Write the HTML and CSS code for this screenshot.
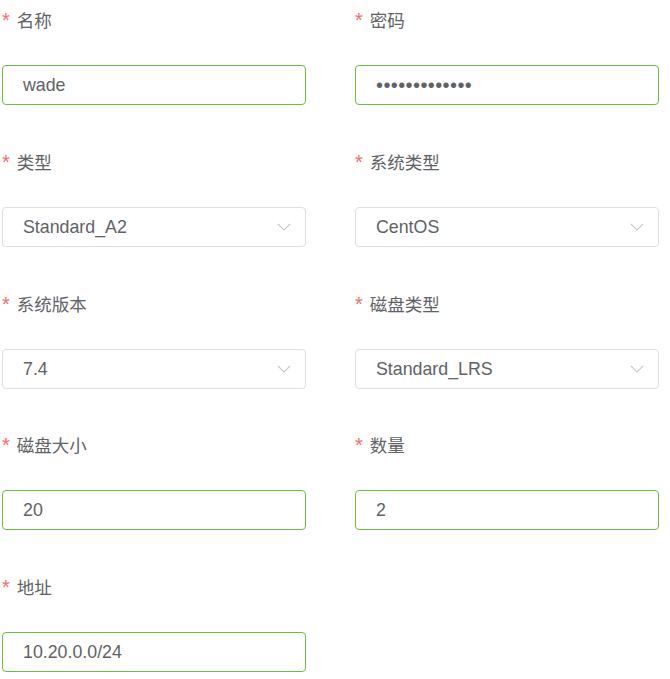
FILE: index.html
```html
<!DOCTYPE html>
<html lang="zh">
<head>
<meta charset="utf-8">
<link rel="stylesheet" href="styles.css">
</head>
<body>
<form class="form">
  <div class="item">
    <div class="label"><span class="req">*</span>名称</div>
    <div class="control ok">wade</div>
  </div>
  <div class="item">
    <div class="label"><span class="req">*</span>密码</div>
    <div class="control ok dots">•••••••••••••</div>
  </div>
  <div class="item">
    <div class="label"><span class="req">*</span>类型</div>
    <div class="control select">Standard_A2<svg class="arrow" viewBox="0 0 16 9"><polyline points="1,1 8,8 15,1"/></svg></div>
  </div>
  <div class="item">
    <div class="label"><span class="req">*</span>系统类型</div>
    <div class="control select">CentOS<svg class="arrow" viewBox="0 0 16 9"><polyline points="1,1 8,8 15,1"/></svg></div>
  </div>
  <div class="item">
    <div class="label"><span class="req">*</span>系统版本</div>
    <div class="control select">7.4<svg class="arrow" viewBox="0 0 16 9"><polyline points="1,1 8,8 15,1"/></svg></div>
  </div>
  <div class="item">
    <div class="label"><span class="req">*</span>磁盘类型</div>
    <div class="control select">Standard_LRS<svg class="arrow" viewBox="0 0 16 9"><polyline points="1,1 8,8 15,1"/></svg></div>
  </div>
  <div class="item">
    <div class="label"><span class="req">*</span>磁盘大小</div>
    <div class="control ok">20</div>
  </div>
  <div class="item">
    <div class="label"><span class="req">*</span>数量</div>
    <div class="control ok">2</div>
  </div>
  <div class="item">
    <div class="label"><span class="req">*</span>地址</div>
    <div class="control ok">10.20.0.0/24</div>
  </div>
</form>
</body>
</html>
```
FILE: styles.css
```css
html, body {
  margin: 0;
  padding: 0;
  background: #fff;
}
body {
  font-family: "Liberation Sans", "Noto Sans CJK SC", sans-serif;
  color: #606266;
}
.form {
  display: grid;
  grid-template-columns: 304px 304px;
  column-gap: 49px;
  padding-left: 2px;
}
.item {
  display: flex;
  flex-direction: column;
  padding-bottom: 36.75px;
}
.label {
  height: 40px;
  line-height: 40px;
  font-size: 17.5px;
  font-family: "Noto Sans CJK SC", sans-serif;
  color: #606266;
  margin-bottom: 25px;
  margin-left: 0;
}
.req {
  color: #f56c6c;
  font-family: "Liberation Sans", sans-serif;
  font-size: 20px;
  margin-right: 7px;
}
.control {
  box-sizing: border-box;
  height: 40px;
  border: 1px solid #dcdfe6;
  border-radius: 4px;
  padding: 0 20px;
  font-size: 17.8px;
  line-height: 38px;
  color: #606266;
  display: flex;
  align-items: center;
  justify-content: space-between;
}
.control.ok {
  border-color: #67c23a;
}
.dots {
  letter-spacing: 0.4px;
  font-size: 20px;
}
.arrow {
  width: 14px;
  height: 8px;
  margin-right: -6px;
  fill: none;
  stroke: #c0c4cc;
  stroke-width: 1.3;
}
```
